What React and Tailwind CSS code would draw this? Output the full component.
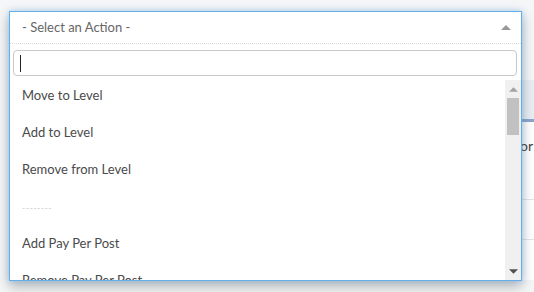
const options = [
  "Move to Level",
  "Add to Level",
  "Remove from Level",
  "--------",
  "Add Pay Per Post",
  "Remove Pay Per Post",
];

function Triangle({ up, className }) {
  return (
    <svg width="10" height="5" viewBox="0 0 10 5" className={className}>
      <path d={up ? "M0 5 L5 0 L10 5 Z" : "M0 0 L10 0 L5 5 Z"} fill="currentColor" />
    </svg>
  );
}

export default function App() {
  return (
    <div
      className="relative w-[534px] h-[292px] overflow-hidden bg-[#f5f6f8]"
      style={{ fontFamily: "Lato, 'Open Sans', sans-serif" }}
    >
      {/* page behind the dropdown */}
      <div className="pt-[80px] pl-[10px]">
        <div className="h-[39px] bg-[#e9eef5]" />
        <div className="h-[3px] bg-[#8ba6d0]" />
        <div className="h-[78px] border-b border-[#e3e5e8] bg-white flex justify-end pt-[13px] pr-[1px]">
          <span className="text-[14px] text-[#444]">Vendor</span>
        </div>
        <div className="h-[40px] border-b border-[#e3e5e8] bg-white" />
        <div className="h-[40px] bg-white flex items-end pl-[38px] gap-[310px]">
          <span className="w-[12px] h-[6px] border border-[#999] border-b-0 rounded-t-[3px]" />
          <span className="w-[2px] h-[2px] bg-[#555]" />
        </div>
      </div>

      {/* open select */}
      <div className="absolute left-[9px] top-[11px] w-[513px] h-[270px] bg-white border border-[#66aee9] shadow-[0_0_6px_rgba(102,175,233,0.5),0_6px_12px_rgba(0,0,0,0.25)] flex flex-col">
        <div className="h-[32px] flex items-center justify-between pl-[12px] pr-[10px] border-b border-dotted border-[#dcdcdc]">
          <span className="text-[13px] text-[#666]">- Select an Action -</span>
          <Triangle up className="text-[#999]" />
        </div>
        <div className="ml-[3px] mr-[4px] mt-[6px] h-[26px] border border-[#c9c9c9] rounded-[4px] flex items-center pl-[6px]">
          <span className="w-px h-[17px] bg-[#222]" />
        </div>
        <div className="mt-[4px] flex-1 flex overflow-hidden">
          <div className="flex-1 flex flex-col pl-[12px]">
            {options.map((o) => (
              <div key={o} className="h-[37px] shrink-0 pt-[2px]">
                {o === "--------" ? (
                  <span className="text-[9px] leading-[18px] text-[#cfcfcf] tracking-[0.4px]">{o}</span>
                ) : (
                  <span className="text-[13px] leading-[18px] text-[#4a4a4a]">{o}</span>
                )}
              </div>
            ))}
          </div>
          <div className="w-[16px] bg-[#f0f0f0] flex flex-col items-center">
            <Triangle up className="mt-[7px] text-[#a3a3a3] w-[9px]" />
            <div className="mt-[6px] w-[12px] h-[37px] bg-[#c1c1c1]" />
            <div className="flex-1" />
            <Triangle className="mb-[6px] text-[#505050] w-[9px]" />
          </div>
        </div>
      </div>
    </div>
  );
}
